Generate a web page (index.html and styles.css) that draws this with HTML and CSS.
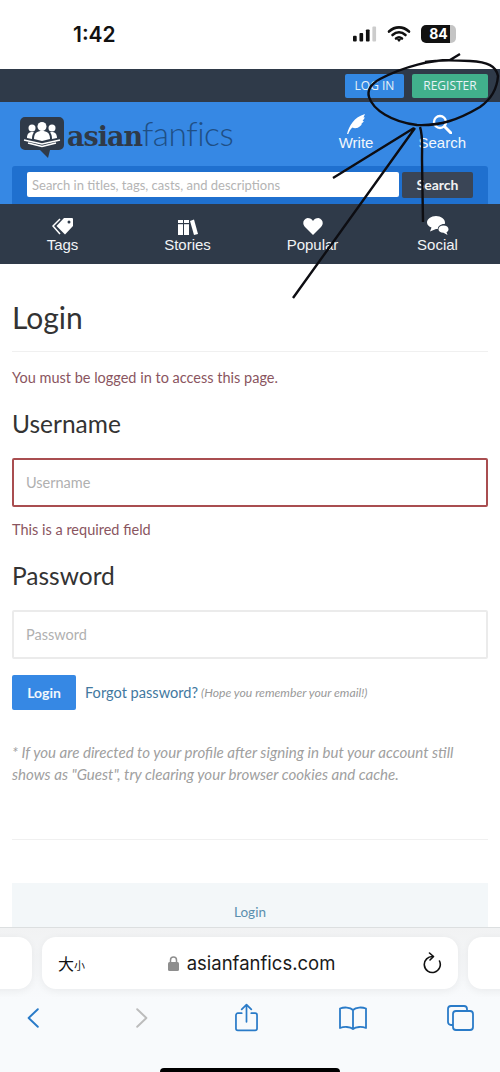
FILE: index.html
```html
<!DOCTYPE html>
<html lang="en">
<head>
    <meta charset="UTF-8">
    <meta name="viewport" content="width=device-width, initial-scale=1.0">
    <title>Login - Asianfanfics</title>
    <link rel="stylesheet" href="styles.css">
</head>
<body>
<div class="phone">
    <div class="status-bar">
        <span class="status-time">1:42</span>
        <div class="status-icons">
            <svg width="24" height="18" viewBox="0 0 26 18">
                <rect x="0" y="11" width="4" height="6" rx="1" fill="#111"/>
                <rect x="7" y="8" width="4" height="9" rx="1" fill="#111"/>
                <rect x="14" y="4" width="4" height="13" rx="1" fill="#111"/>
                <rect x="21" y="1" width="4" height="16" rx="1" fill="#ccc"/>
            </svg>
            <svg width="24" height="18" viewBox="0 0 24 18">
                <path d="M2 6.5C8 1 16 1 22 6.5M5.5 10C9.500 6.500 14.500 6.500 18.500 10M9 13.500C10.800 12 13.200 12 15 13.500" fill="none" stroke="#111" stroke-width="2.600" stroke-linecap="round"/>
                <path d="M9.800 14.500L12 17l2.200-2.500C13 13.500 11 13.500 9.800 14.500z" fill="#111"/>
            </svg>
            <div class="battery"><span class="battery-level">84</span></div>
        </div>
    </div>

    <div class="top-bar">
        <a class="top-btn top-btn-login">LOG IN</a>
        <a class="top-btn top-btn-register">REGISTER</a>
    </div>

    <header class="site-header">
        <div class="header-row">
            <div class="logo">
                <svg class="logo-mark" width="44" height="41" viewBox="0 0 44 41">
                    <path d="M5 0h34a5 5 0 0 1 5 5v23a5 5 0 0 1-5 5h-9l-2 8-8-8H5a5 5 0 0 1-5-5V5a5 5 0 0 1 5-5z" fill="#2f3a49"/>
                    <circle cx="22" cy="9.500" r="4.500" fill="#fff"/>
                    <circle cx="12" cy="11" r="3.500" fill="#fff"/>
                    <circle cx="32" cy="11" r="3.500" fill="#fff"/>
                    <path d="M14 22c0-6 3-8 8-8s8 2 8 8l-8 2z" fill="#fff"/>
                    <path d="M7 21c0-4 2-6 5-6 1 0 2 .3 2 .3-1.500 2-2 4-2 6.700zM37 21c0-4-2-6-5-6-1 0-2 .3-2 .3 1.500 2 2 4 2 6.700z" fill="#fff"/>
                    <path d="M4 23l18 4 18-4M8 26l14 3.500L36 26" fill="none" stroke="#fff" stroke-width="1.500"/>
                </svg>
                <span class="logo-text"><b>asian</b>fanfics</span>
            </div>
            <div class="header-links">
                <a class="header-link">
                    <svg width="20" height="20" viewBox="0 0 20 20"><path d="M1 20C3 12 8 3 19 0l-1.500 3.500L19 3.500l-2.500 3.500 1.500.2-3 3 1 .3-3 2.500c-2 1.500-5 1.500-6.500.5C4.500 15 3 17.500 2.300 20z" fill="#fff"/></svg>
                    <span>Write</span>
                </a>
                <a class="header-link">
                    <svg width="20" height="20" viewBox="0 0 20 20"><circle cx="8" cy="8" r="6" fill="none" stroke="#fff" stroke-width="2.400"/><path d="M12.500 12.500L19 19" stroke="#fff" stroke-width="3" stroke-linecap="round"/></svg>
                    <span>Search</span>
                </a>
            </div>
        </div>
        <div class="search-panel">
            <div class="search-input">Search in titles, tags, casts, and descriptions</div>
            <button class="search-btn">Search</button>
        </div>
    </header>

    <nav class="main-nav">
        <a class="nav-item">
            <svg width="21" height="17" viewBox="0 0 21 17">
                <path d="M12 0h8a1 1 0 0 1 1 1v7l-8 8.500L4.500 8z" fill="#fff"/>
                <circle cx="17" cy="4" r="1.500" fill="#2f3a49"/>
                <path d="M8 1L1 8l7 8" fill="none" stroke="#fff" stroke-width="1.500"/>
            </svg>
            <span>Tags</span>
        </a>
        <a class="nav-item">
            <svg width="20" height="17" viewBox="0 0 20 17">
                <rect x="0" y="2" width="5" height="15" fill="#fff"/>
                <rect x="6" y="2" width="5" height="15" fill="#fff"/>
                <path d="M12 3l4-1.500L20 16l-4 1z" fill="#fff"/>
                <rect x="0" y="5" width="11" height="1.200" fill="#2f3a49"/>
            </svg>
            <span>Stories</span>
        </a>
        <a class="nav-item">
            <svg width="20" height="17" viewBox="0 0 20 17"><path d="M10 17L2 9C-1 6 0 1 4.500 0 7 0 9 1 10 3c1-2 3-3 5.500-3C20 1 21 6 18 9z" fill="#fff"/></svg>
            <span>Popular</span>
        </a>
        <a class="nav-item">
            <svg width="22" height="19" viewBox="0 0 22 19">
                <path d="M9 0c5 0 9 3 9 6.500 0 .5-.1 1-.2 1.500-3.500-.5-7 2-7 5H9l-6 2.500 1.500-4C2 10.500 0 9 0 6.500 0 3 4 0 9 0z" fill="#fff"/>
                <path d="M16.500 9.500c3 0 5 1.700 5 3.700 0 1.300-.8 2.300-2 3l1 2.800-4-2.200c-3 0-5-1.600-5-3.600s2-3.700 5-3.700z" fill="#fff"/>
            </svg>
            <span>Social</span>
        </a>
    </nav>

    <main class="content">
        <h1 class="page-title">Login</h1>
        <p class="error-text error-top">You must be logged in to access this page.</p>
        <h2 class="field-title">Username</h2>
        <div class="field field-error">Username</div>
        <p class="error-text error-field">This is a required field</p>
        <h2 class="field-title">Password</h2>
        <div class="field">Password</div>
        <div class="form-actions">
            <button class="login-btn">Login</button>
            <a class="forgot-link">Forgot password?</a>
            <em class="forgot-hint">(Hope you remember your email!)</em>
        </div>
        <p class="note">* If you are directed to your profile after signing in but your account still shows as "Guest", try clearing your browser cookies and cache.</p>
        <div class="footer-panel"><a class="footer-link">Login</a></div>
    </main>

    <div class="browser-bar">
        <div class="tabs-row">
            <div class="tab-side tab-left"></div>
            <div class="url-pill">
                <span class="text-size">大<small>小</small></span>
                <div class="url">
                    <svg width="11" height="15" viewBox="0 0 11 15">
                        <path d="M2.500 7V4a3 3 0 0 1 6 0v3" fill="none" stroke="#8e8e8e" stroke-width="1.500"/>
                        <rect x="0" y="6" width="11" height="9" rx="1.500" fill="#8e8e8e"/>
                    </svg>
                    <span>asianfanfics.com</span>
                </div>
                <svg width="20" height="22" viewBox="0 0 20 22">
                    <path d="M11 4.500A8 8 0 1 0 17.500 9" fill="none" stroke="#111" stroke-width="1.600" stroke-linecap="round"/>
                    <path d="M7.500 1l4 3.500-3.500 3.500" fill="none" stroke="#111" stroke-width="1.600" stroke-linecap="round" stroke-linejoin="round"/>
                </svg>
            </div>
            <div class="tab-side tab-right"></div>
        </div>
        <div class="toolbar">
            <svg width="14" height="24" viewBox="0 0 16 26"><path d="M13.500 3L3 13l10.500 10" fill="none" stroke="#2a7bc8" stroke-width="2.200" stroke-linecap="round" stroke-linejoin="round"/></svg>
            <svg class="toolbar-forward" width="14" height="24" viewBox="0 0 16 26"><path d="M2.500 3L13 13 2.500 23" fill="none" stroke="#bcbcbc" stroke-width="2.200" stroke-linecap="round" stroke-linejoin="round"/></svg>
            <svg width="23" height="30" viewBox="0 0 24 30" fill="none" stroke="#2a7bc8" stroke-width="1.800" stroke-linecap="round" stroke-linejoin="round">
                <path d="M7 10H3a2 2 0 0 0-2 2v14a2 2 0 0 0 2 2h18a2 2 0 0 0 2-2V12a2 2 0 0 0-2-2h-4"/>
                <path d="M12 19V1M7 6l5-5 5 5"/>
            </svg>
            <svg width="30" height="24" viewBox="0 0 30 24" fill="none" stroke="#2a7bc8" stroke-width="1.800" stroke-linejoin="round">
                <path d="M15 4C12 1 6 1 2 2.500V22c4-1.500 10-1.500 13 1 3-2.500 9-2.500 13 -1V2.500C24 1 18 1 15 4zM15 4v19"/>
            </svg>
            <svg width="28" height="26" viewBox="0 0 28 26" fill="none" stroke="#2a7bc8" stroke-width="1.800">
                <rect x="7" y="6" width="20" height="19" rx="3"/>
                <path d="M7 20H5a3 3 0 0 1-3-3V4a3 3 0 0 1 3-3h13a3 3 0 0 1 3 3v2"/>
            </svg>
        </div>
        <div class="home-bar"></div>
    </div>

    <!-- pen marks drawn over the screenshot -->
    <svg class="scribble" width="500" height="320" viewBox="0 0 500 320">
        <path d="M460 54L450 60C432 60 405 66 380 79 371 84 367 90 369 97 373 110 392 122 417 125 440 126 458 120 480 107 490 100 497 90 498 76 496 66 488 62 470 61 450 60 436 60 425 62" fill="none" stroke="#0d0d12" stroke-width="2.400"/>
        <path d="M414 128L333 178M415 128L293 298" fill="none" stroke="#0d0d12" stroke-width="2.400"/>
        <path d="M420 127C423 135 422 145 422 160L423 222" fill="none" stroke="#0d0d12" stroke-width="2.400"/>
    </svg>
</div>
</body>
</html>
```
FILE: styles.css
```css
* {
    box-sizing: border-box;
}

body {
    margin: 0;
    background: #fff;
    font-family: Lato, sans-serif;
}

.phone {
    position: relative;
    display: flex;
    flex-direction: column;
    width: 500px;
    height: 1072px;
    overflow: hidden;
}

/* status bar */
.status-bar {
    display: flex;
    align-items: center;
    justify-content: space-between;
    height: 69px;
    padding: 0 44px 1px 73px;
    flex: none;
}

.status-time {
    font-family: Inter, sans-serif;
    font-size: 21px;
    font-weight: 600;
    color: #111;
}

.status-icons {
    display: flex;
    align-items: center;
    gap: 10px;
}

.battery {
    width: 35px;
    height: 18px;
    border-radius: 5px;
    background: linear-gradient(90deg, #111 84%, #c4c4c4 84%);
    text-align: center;
}

.battery-level {
    font-family: Inter, sans-serif;
    font-size: 14px;
    font-weight: 700;
    line-height: 18px;
    color: #fff;
    display: block;
}

/* site header */
.top-bar {
    display: flex;
    justify-content: flex-end;
    align-items: center;
    gap: 8px;
    height: 33px;
    padding-right: 12px;
    background: #2f3a49;
    flex: none;
}

.top-btn {
    height: 24px;
    border-radius: 2px;
    font-family: "Open Sans", sans-serif;
    font-size: 12px;
    line-height: 24px;
    text-align: center;
    color: #e8f3f7;
}

.top-btn-login {
    width: 59px;
    background: #3388e3;
}

.top-btn-register {
    width: 76px;
    background: #41b08c;
}

.site-header {
    height: 102px;
    background: #3688e4;
    flex: none;
}

.header-row {
    display: flex;
    justify-content: space-between;
    height: 64px;
    padding: 12px 34px 0 20px;
}

.logo {
    display: flex;
    align-items: flex-start;
    gap: 3px;
    padding-top: 2px;
}

.logo-text {
    font-family: Lato, sans-serif;
    font-size: 33.500px;
    font-weight: 300;
    line-height: 34px;
    letter-spacing: -0.5px;
    color: #1f4f85;
}

.logo-mark {
    margin-top: 1px;
}

.logo-text b {
    font-family: "DejaVu Serif", serif;
    font-size: 27px;
    font-weight: 700;
    letter-spacing: -1px;
    color: #2f3a49;
}

.header-links {
    display: flex;
    gap: 45px;
}

.header-link {
    display: flex;
    flex-direction: column;
    align-items: center;
    font-family: "Liberation Sans", sans-serif;
    font-size: 15px;
    line-height: 18px;
    color: #f2f7fc;
}

.search-panel {
    display: flex;
    gap: 3px;
    height: 38px;
    margin: 0 12px;
    padding: 6px 15px 0 15px;
    border-radius: 3px 3px 0 0;
    background: #1f70cf;
}

.search-input {
    width: 372px;
    height: 25px;
    padding-left: 5px;
    border-radius: 2px;
    background: #fff;
    font-size: 13px;
    line-height: 26px;
    color: #b4b4b4;
}

.search-btn {
    width: 71px;
    height: 26px;
    padding: 0 0 2px;
    border: 0;
    border-radius: 2px;
    background: #3a4556;
    font-family: Lato, sans-serif;
    font-size: 14px;
    font-weight: 700;
    color: #f2f2f2;
}

.main-nav {
    display: flex;
    height: 60px;
    background: #2f3a49;
    flex: none;
}

.nav-item {
    display: flex;
    flex-direction: column;
    align-items: center;
    justify-content: flex-end;
    width: 125px;
    height: 49px;
    font-family: "Liberation Sans", sans-serif;
    font-size: 15px;
    line-height: 17px;
    color: #f2f4f6;
}

.nav-item svg {
    margin-bottom: 1px;
}

/* login form */
.content {
    flex: 1;
    min-height: 0;
    overflow: hidden;
    padding: 0 12px;
}

.page-title {
    margin: 0;
    height: 88px;
    padding-top: 35px;
    border-bottom: 1px solid #f0f0f0;
    font-family: Lato, sans-serif;
    font-size: 30px;
    font-weight: 400;
    line-height: 36px;
    color: #333;
}

.error-text {
    margin: 0;
    font-size: 14.500px;
    line-height: 20px;
    color: #8a5560;
}

.error-top {
    margin-top: 16px;
}

.error-field {
    margin-top: 13px;
}

.field-title {
    margin: 0;
    padding-top: 20px;
    font-family: Lato, sans-serif;
    font-size: 24.500px;
    font-weight: 400;
    line-height: 32px;
    color: #333;
}

.field {
    height: 49px;
    margin-top: 18px;
    padding-left: 12px;
    border: 2px solid #ebebeb;
    border-radius: 2px;
    font-size: 14.500px;
    line-height: 45px;
    color: #b0b0b0;
}

.field-error {
    border-color: #a94e50;
}

.form-actions {
    display: flex;
    align-items: center;
    margin-top: 16px;
}

.login-btn {
    width: 64px;
    height: 35px;
    padding: 0;
    border: 0;
    border-radius: 2px;
    background: #3688e4;
    font-family: Lato, sans-serif;
    font-size: 14px;
    font-weight: 700;
    color: #f2f7fc;
}

.forgot-link {
    margin-left: 9px;
    font-size: 14.600px;
    color: #43799f;
}

.forgot-hint {
    margin-left: 3px;
    font-size: 12.200px;
    color: #999;
}

.note {
    height: 99px;
    margin: 31px 0 0;
    border-bottom: 1px solid #f0f0f0;
    font-size: 15.100px;
    font-style: italic;
    line-height: 22px;
    color: #a0a0a0;
}

.footer-panel {
    height: 60px;
    margin-top: 43px;
    padding-top: 20px;
    background: #f3f7f9;
    font-size: 13.500px;
    line-height: 18px;
    text-align: center;
}

.footer-link {
    color: #5b8fae;
}

/* safari bar */
.browser-bar {
    position: relative;
    height: 145px;
    border-top: 1px solid #dcdfe0;
    background: linear-gradient(#f1f2f3, #f8fafc 50%);
    flex: none;
}

.tabs-row {
    display: flex;
    gap: 10px;
    padding-top: 9px;
    margin-left: -20px;
    width: 540px;
}

.tab-side {
    width: 52px;
    height: 52px;
    border-radius: 14px;
    background: #fff;
    box-shadow: 0 2px 8px rgba(0, 0, 0, 0.06);
}

.url-pill {
    display: flex;
    align-items: center;
    width: 416px;
    height: 52px;
    padding: 0 16px;
    border-radius: 14px;
    background: #fff;
    box-shadow: 0 2px 8px rgba(0, 0, 0, 0.06);
}

.text-size {
    font-family: "Noto Sans CJK SC", sans-serif;
    font-size: 16px;
    color: #111;
}

.text-size small {
    font-size: 11px;
}

.url {
    display: flex;
    align-items: center;
    gap: 8px;
    flex: 1;
    justify-content: center;
    padding-right: 4px;
    font-family: Inter, sans-serif;
    font-size: 18.500px;
    color: #1a1a1a;
}

.toolbar {
    display: grid;
    grid-template-columns: repeat(5, 1fr);
    justify-items: center;
    align-items: center;
    height: 30px;
    margin: 14px -13px 0 -20px;
}

.toolbar-forward {
    margin-left: 5px;
}

.home-bar {
    position: absolute;
    left: 160px;
    bottom: 0;
    width: 180px;
    height: 4px;
    border-radius: 4px 4px 0 0;
    background: #000;
}

.scribble {
    position: absolute;
    top: 0;
    left: 0;
    pointer-events: none;
}
```
